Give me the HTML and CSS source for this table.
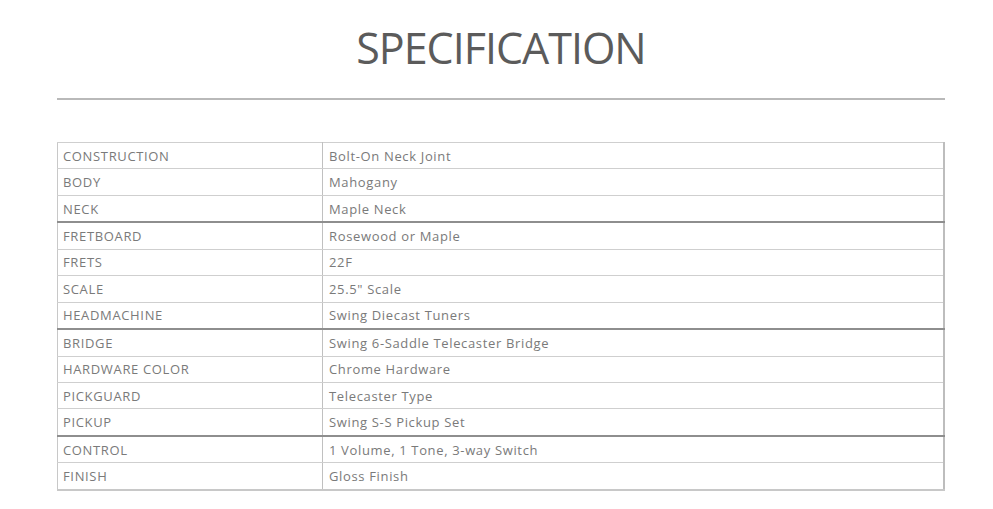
FILE: index.html
```html
<!DOCTYPE html>
<html lang="en">
<head>
<meta charset="utf-8">
<title>Specification</title>
<link rel="stylesheet" href="styles.css">
</head>
<body>
<section class="spec">
  <h2 class="spec-title">SPECIFICATION</h2>
  <div class="spec-rule"></div>
  <table class="spec-table">
    <tbody>
      <tr><td class="k">CONSTRUCTION</td><td class="v">Bolt-On Neck Joint</td></tr>
      <tr><td class="k">BODY</td><td class="v">Mahogany</td></tr>
      <tr><td class="k">NECK</td><td class="v">Maple Neck</td></tr>
      <tr class="grp"><td class="k">FRETBOARD</td><td class="v">Rosewood or Maple</td></tr>
      <tr><td class="k">FRETS</td><td class="v">22F</td></tr>
      <tr><td class="k">SCALE</td><td class="v">25.5" Scale</td></tr>
      <tr><td class="k">HEADMACHINE</td><td class="v">Swing Diecast Tuners</td></tr>
      <tr class="grp"><td class="k">BRIDGE</td><td class="v">Swing 6-Saddle Telecaster Bridge</td></tr>
      <tr><td class="k">HARDWARE COLOR</td><td class="v">Chrome Hardware</td></tr>
      <tr><td class="k">PICKGUARD</td><td class="v">Telecaster Type</td></tr>
      <tr><td class="k">PICKUP</td><td class="v">Swing S-S Pickup Set</td></tr>
      <tr class="grp"><td class="k">CONTROL</td><td class="v">1 Volume, 1 Tone, 3-way Switch</td></tr>
      <tr><td class="k">FINISH</td><td class="v">Gloss Finish</td></tr>
    </tbody>
  </table>
</section>
</body>
</html>
```

FILE: styles.css
```css
html, body {
  margin: 0;
  padding: 0;
  background: #ffffff;
}

body {
  font-family: "Open Sans", "Noto Sans", sans-serif;
  color: #777777;
}

.spec {
  width: 888px;
  margin: 0 0 0 57px;
  padding-top: 21px;
}

.spec-title {
  margin: 0;
  text-align: center;
  font-weight: 400;
  font-size: 43px;
  line-height: 54px;
  color: #5b5b5b;
  letter-spacing: -1px;
}

.spec-rule {
  height: 2px;
  background: #b9b9b9;
  margin-top: 23px;
}

.spec-table {
  width: 888px;
  margin-top: 42px;
  border-collapse: collapse;
  border: 1px solid #c8c8c8;
  border-right: 2px solid #bdbdbd;
  border-bottom: 2px solid #c8c8c8;
  font-size: 13px;
  letter-spacing: 0.65px;
}

.spec-table td {
  height: 25.45px;
  padding: 0 5px;
  border-top: 1px solid #cfcfcf;
  border-bottom: 1px solid #cfcfcf;
  color: #7a7a7a;
  vertical-align: middle;
  line-height: 16px;
  white-space: nowrap;
}

.spec-table td.k {
  width: 254px;
  border-right: 1px solid #c0c0c0;
}

.spec-table td.v {
  padding-left: 6px;
}

.spec-table tr.grp td {
  border-top: 2px solid #8e8e8e;
}
```
